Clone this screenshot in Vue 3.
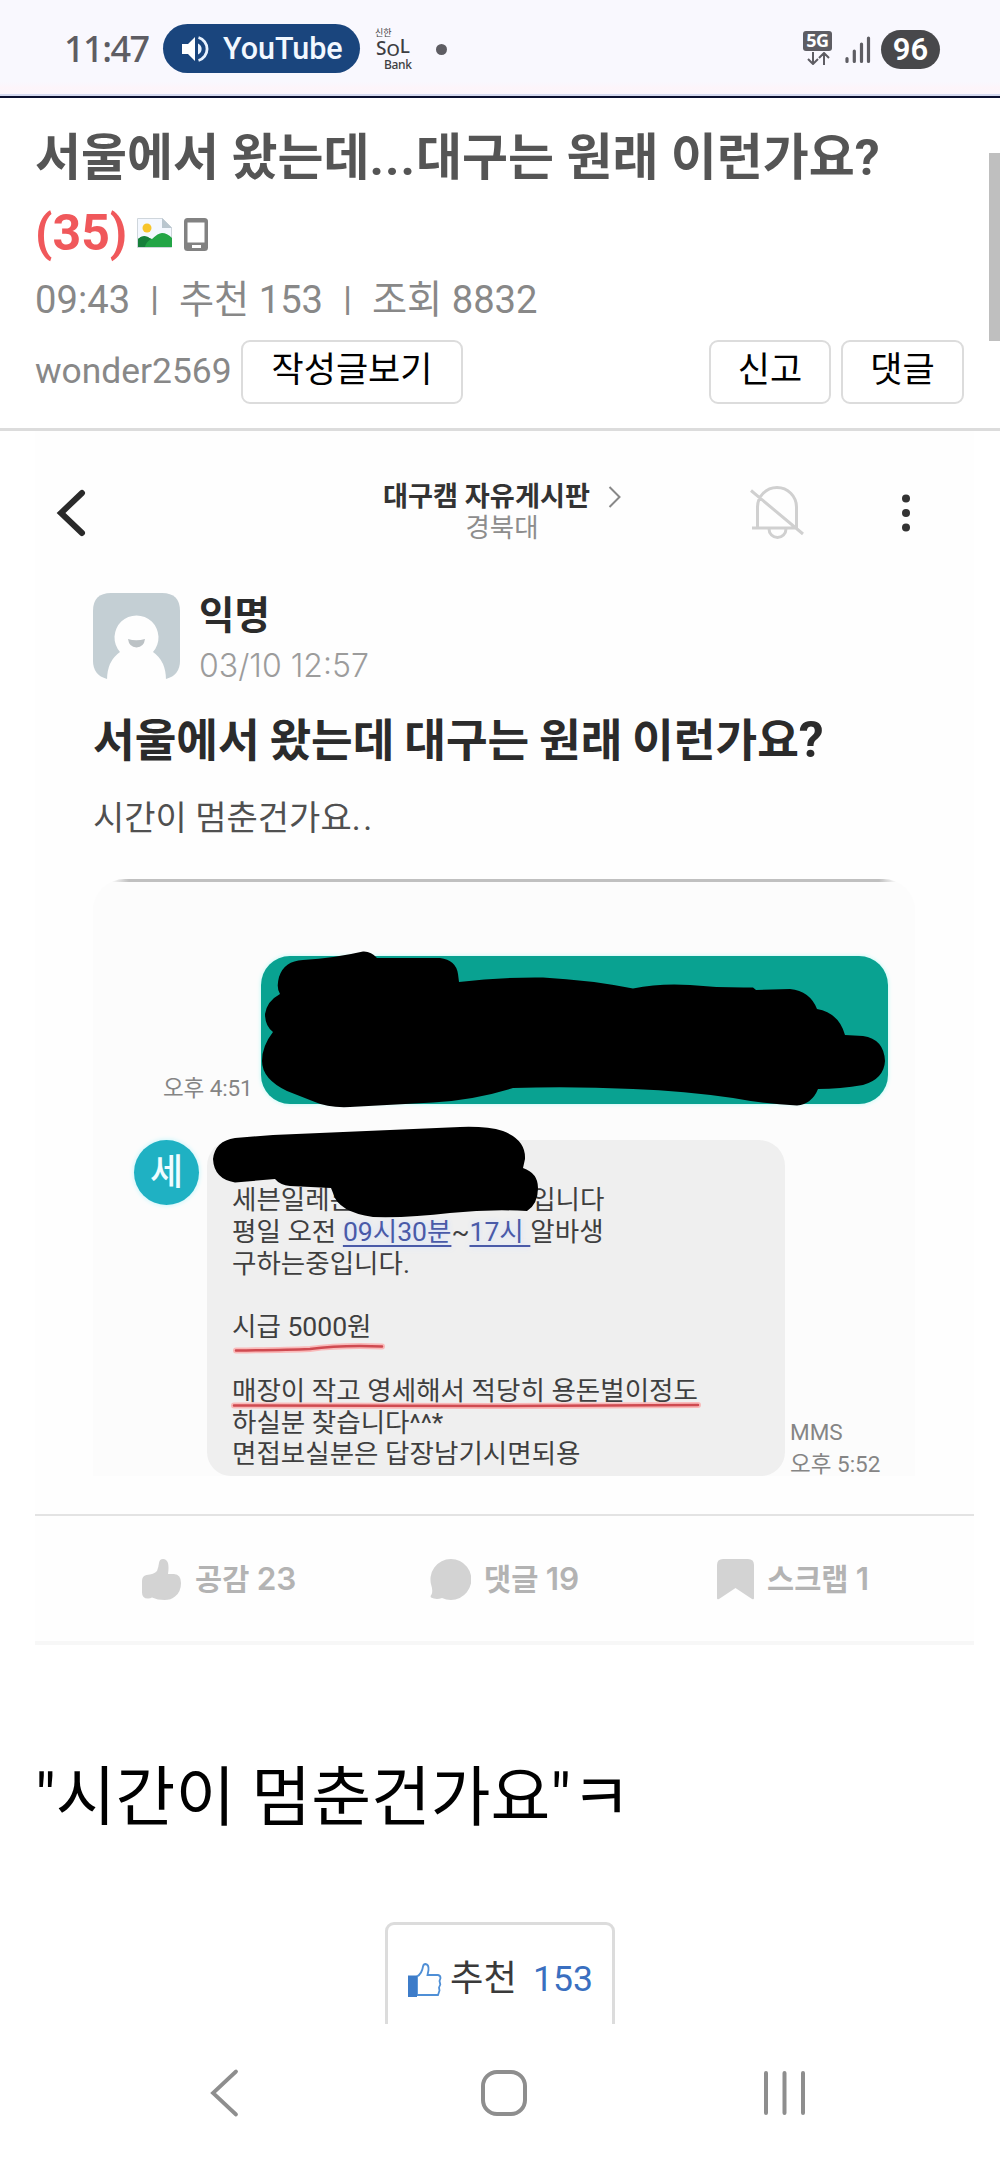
<script setup>
const messageLines = [
  [{ t: '세븐일레븐' }, { gap: true }, { t: '입니다' }],
  [{ t: '평일 오전 ' }, { t: '09시30분', link: true }, { t: '~' }, { t: '17시 ', link: true }, { t: '알바생' }],
  [{ t: '구하는중입니다.' }],
  [],
  [{ t: '시급 5000원' }],
  [],
  [{ t: '매장이 작고 영세해서 적당히 용돈벌이정도' }],
  [{ t: '하실분 찾습니다^^*' }],
  [{ t: '면접보실분은 답장남기시면되용' }],
]
</script>

<template>
  <div class="screen">
    <header class="status">
      <span class="clock">11:47</span>
      <span class="pill">
        <svg class="speaker" width="28" height="28" viewBox="0 0 28 28">
          <path d="M1 9h6l7-7v24l-7-7H1z" fill="#fff" />
          <path d="M17 8.500a6 6 0 0 1 0 11z" fill="#e8f2ff" />
          <path d="M17.500 2.500a12 12 0 0 1 0 23" fill="none" stroke="#e8f2ff" stroke-width="2.800" />
        </svg>
        <span class="app">YouTube</span>
      </span>
      <span class="bank">
        <span class="bank-top">신한</span>
        <span class="bank-mid"><i>S</i><i class="o">O</i><i class="l">L</i></span>
        <span class="bank-low">Bank</span>
      </span>
      <span class="dot"></span>
      <span class="net">
        <span class="fiveg">5G</span>
        <svg width="24" height="13" viewBox="0 0 24 13" fill="none" stroke="#5e5d63" stroke-width="2">
          <path d="M7 0v12M2 7l5 5 5-5M18 13V1M13 6l5-5 5 5" />
        </svg>
      </span>
      <svg class="signal" width="26" height="28" viewBox="0 0 26 28" stroke="#5e5d63" stroke-width="3.200" stroke-linecap="round">
        <path d="M2 22.500v3M9.300 15v10.500M16.500 8v17.500M23.500 2v23.500" />
      </svg>
      <span class="battery">96</span>
    </header>

    <section class="head">
      <h1 class="title">서울에서 왔는데<span class="dots">...</span>대구는 원래 이런가요?</h1>
      <div class="count-row">
        <span class="count">(35)</span>
        <svg class="pic" width="35" height="30" viewBox="0 0 35 30">
          <path d="M.5.5h25l9 9v20H.5z" fill="#f4f8ff" stroke="#cfd6dc" />
          <path d="M25 0l10 10H25z" fill="#b9c6cf" />
          <circle cx="10" cy="10" r="4.500" fill="#f7c52c" />
          <path d="M1 29V21q5-4 10-1.500l4 1.500q6-6 10-6 5 0 10 5v9z" fill="#23a546" />
          <path d="M1 29V21q6-6 13 0-5 3-6 8z" fill="#16803a" />
        </svg>
        <svg class="phone" width="24" height="33" viewBox="0 0 24 33">
          <rect width="24" height="33" rx="3.500" fill="#828282" />
          <path d="M3.500 4.500h17v20h-17z" fill="#fff" />
          <rect x="8" y="27" width="9" height="3" fill="#fff" />
        </svg>
      </div>
      <p class="meta">09:43 <span class="sep">ㅣ</span> 추천 153 <span class="sep">ㅣ</span> 조회 8832</p>
      <div class="author">
        <span class="nick">wonder2569</span>
        <button class="btn wide">작성글보기</button>
        <span class="grow"></span>
        <button class="btn">신고</button>
        <button class="btn last">댓글</button>
      </div>
    </section>
    <div class="scrollbar"></div>

    <article class="capture">
      <div class="bar">
        <svg class="back" width="30" height="50" viewBox="0 0 30 50">
          <path d="M26 5L5 25l21 20" fill="none" stroke="#2a2a2a" stroke-width="6" stroke-linecap="round" />
        </svg>
        <div class="board">
          <div class="board-name">
            <b>대구캠 자유게시판</b>
            <svg width="13" height="24" viewBox="0 0 13 24"><path d="M1.500 2L11.500 12l-10 10" fill="none" stroke="#888" stroke-width="2" /></svg>
          </div>
          <span class="school">경북대</span>
        </div>
        <svg class="bell" width="56" height="56" viewBox="0 0 56 56" fill="none" stroke="#d0d0d0" stroke-width="3">
          <path d="M3 43h46M8.500 43V22a19.500 19.500 0 0 1 39 0v21M20 44a8.500 8.500 0 0 0 17 0M2 5.500L54 49" />
        </svg>
        <svg class="more" width="10" height="40" viewBox="0 0 10 40" fill="#333">
          <circle cx="5" cy="5.500" r="4" /><circle cx="5" cy="20" r="4" /><circle cx="5" cy="34.500" r="4" />
        </svg>
      </div>

      <div class="writer">
        <svg width="87" height="87" viewBox="0 0 87 87">
          <path d="M18 0h51q18 0 18 18v50q0 14-14 18H14Q0 82 0 68V18Q0 0 18 0z" fill="#c4cfd4" />
          <path d="M14 87q0-19 13-28a22 22 0 1 1 33 0q13 9 13 28z" fill="#fefefe" />
          <path d="M35 46q8 2.500 17 0-1 8-8.500 8.500Q36 54 35 46z" fill="#bcc2c5" />
        </svg>
        <div class="who">
          <b>익명</b>
          <span>03/10 12:57</span>
        </div>
      </div>

      <h2>서울에서 왔는데 대구는 원래 이런가요<span class="q">?</span></h2>
      <p class="body">시간이 멈춘건가요<span class="dots">..</span></p>

      <div class="chat">
        <div class="sent">
          <span class="time">오후 4:51</span>
          <div class="green"></div>
        </div>
        <div class="received">
          <span class="face">세</span>
          <div class="gray">
            <div v-for="(line, i) in messageLines" :key="i" class="line">
              <template v-for="(p, j) in line" :key="j"><span v-if="p.gap" class="gap"></span><span v-else :class="{ link: p.link }">{{ p.t }}</span></template>
            </div>
          </div>
          <div class="stamp"><span>MMS</span><span>오후 5:52</span></div>
        </div>
        <svg class="ink" width="822" height="597" viewBox="93 878 822 597">
          <path d="M280 993Q276 987 279 976Q284 960 303 959Q335 957 363 950.500Q371 950 377 957L440 957Q456 959 458 973L459 981Q500 976 543 976.500Q590 979 633 987.500Q660 982 690 984Q720 987 753 986.500L756 989L790 988Q810 990 817 1008Q839 1012 845 1034L863 1035Q884 1038 885 1060Q884 1078 863 1084Q840 1088 818 1088Q812 1103 797 1104.500Q765 1103 733 1097Q685 1090 633 1088Q570 1085 513 1087Q475 1099 433 1101.500L350 1106Q328 1107 315 1101L287 1090Q262 1078 262 1060Q262 1045 273 1031Q265 1025 265 1013Q267 1000 280 993z" />
          <path d="M213 1158Q215 1140 235 1137L273 1134L460 1126Q487 1125 503 1130Q526 1139 525 1158L523 1167Q538 1172 538 1187Q538 1203 527 1210Q490 1208 450 1212Q410 1217 373 1216Q338 1211 333 1192L331 1187L290 1185Q280 1184 275 1178L235 1181.500Q214 1178 213 1158z" />
          <path d="M236 1349.500Q285 1349 310 1348Q340 1344 382 1345.500M234 1404.500L500 1405L698 1404" fill="none" stroke="#f9b9b9" stroke-width="6" stroke-linecap="round" />
          <path d="M236 1349.500Q285 1349 310 1348Q340 1344 382 1345.500M234 1404.500L500 1405L698 1404" fill="none" stroke="#cf4a50" stroke-width="2.500" stroke-linecap="round" />
        </svg>
      </div>

      <div class="stats">
        <div class="stat s1">
          <svg width="39" height="41" viewBox="0 0 39 41" fill="#d3d3d3"><path d="M15 12q1.500-4 2-8Q17.500 0 21 0t5 4q1 4 0 11h6q7 .5 7 9 0 9-6 13.500-4 3.500-10.500 3.500-7 0-12.500-2.500-1.500 1-4 1-6 0-6-6V22q0-5 4.500-6Q12 15.500 15 12z" /></svg>
          <span>공감 <b>23</b></span>
        </div>
        <div class="stat s2">
          <svg width="41" height="41" viewBox="0 0 41 41" fill="#d3d3d3"><path d="M21 0a20.500 20.500 0 1 1-9 39Q6 41 1 38.500q-1-1 .5-3Q3 32 1.500 27A20.500 20.500 0 0 1 21 0z" /></svg>
          <span>댓글 <b>19</b></span>
        </div>
        <div class="stat s3">
          <svg width="37" height="41" viewBox="0 0 37 41" fill="#d3d3d3"><path d="M6 0h25q6 0 6 6v33q0 2-2 1L18.500 29 2 40q-2 1-2-1V6q0-6 6-6z" /></svg>
          <span>스크랩 <b>1</b></span>
        </div>
      </div>
    </article>

    <p class="comment">"시간이 멈춘건가요"ㅋ</p>

    <div class="vote-clip">
      <div class="vote">
        <svg width="34" height="34" viewBox="0 0 34 34">
          <path d="M9 13.500q5-3 6-10Q15.500 1 17.500 1 21 1.500 20.500 7L19.500 12H30q2.500.5 2.500 3l-1 3 .8 3.500-1.300 3 .5 3-1.500 4.500H9z" fill="#fff" stroke="#4f8fd6" stroke-width="1.800" />
          <path d="M0 12.500h9V34H0z" fill="#3d7cc9" />
        </svg>
        <span class="vote-word">추천</span>
        <span class="vote-num">153</span>
      </div>
    </div>

    <nav class="nav">
      <svg class="n-back" width="30" height="50" viewBox="0 0 30 50"><path d="M27 3.500L4 25l23 21.500" fill="none" stroke="#8e8e8e" stroke-width="3.800" stroke-linecap="round" /></svg>
      <svg class="n-home" width="46" height="46" viewBox="0 0 46 46"><rect x="2" y="2" width="42" height="42" rx="14" fill="none" stroke="#8e8e8e" stroke-width="4" /></svg>
      <svg class="n-recent" width="44" height="46" viewBox="0 0 44 46"><path d="M3 3v40M21.500 3v40M40 3v40" stroke="#8e8e8e" stroke-width="4" stroke-linecap="round" /></svg>
    </nav>
  </div>
</template>

<style>
body { background: #fff; }
</style>

<style scoped>
.screen {
  position: relative;
  width: 1000px;
  height: 2166px;
  overflow: hidden;
  background: #fff;
  font-family: Roboto, "Noto Sans CJK KR", sans-serif;
  white-space: nowrap;
}
.screen *, .screen { box-sizing: border-box; }
h1, h2, p { margin: 0; }
svg { display: block; flex: none; }

.status {
  display: flex;
  align-items: flex-start;
  height: 98px;
  padding-left: 64px;
  background: linear-gradient(#f9f8fe 82px, #fdf5fa 88px, #fbf6fc 94px);
  border-bottom: 2px solid #0b1030;
  box-shadow: inset 0 -2px 0 #d5daf0;
}
.clock {
  width: 99px;
  margin-top: 24px;
  font: 500 36px/50px "Noto Sans", sans-serif;
  letter-spacing: -1.500px;
  color: #5e5d63;
}
.pill {
  display: flex;
  align-items: center;
  width: 197px;
  height: 49px;
  margin-top: 24px;
  padding-left: 18px;
  border-radius: 25px;
  background: #1a457d;
}
.app { margin-left: 14px; font-size: 30.500px; font-weight: 500; color: #f2f8ff; }
.bank { display: flex; flex-direction: column; width: 40px; height: 42px; margin: 29px 0 0 15px; color: #3e3e42; }
.bank-top { font-size: 9px; line-height: 9px; }
.bank-mid { display: flex; height: 20px; font: 500 19px/20px "Noto Sans", sans-serif; padding-left: 1px; }
.bank-mid i { font-style: normal; }
.bank-mid .o { font-size: 17px; line-height: 24px; }
.bank-mid .l { line-height: 16px; }
.bank-low { margin-left: 9px; font: 500 12px/14px "Noto Sans", sans-serif; letter-spacing: -.3px; }
.dot { width: 11px; height: 11px; margin: 44px 0 0 21px; border-radius: 50%; background: #5e5d63; }
.net { display: flex; flex-direction: column; align-items: center; width: 29px; margin: 31px 0 0 356px; }
.fiveg { width: 29px; height: 20px; margin-bottom: 1px; border-radius: 3px; background: #5e5d63; color: #fff; font: 700 18px/19px "Noto Sans", sans-serif; letter-spacing: -.5px; text-align: center; }
.signal { margin: 36px 0 0 13px; }
.battery {
  width: 59px;
  height: 39px;
  margin: 30px 0 0 10px;
  border-radius: 20px;
  background: #48484b;
  color: #fff;
  font: 600 31px/39px Roboto, sans-serif;
  text-align: center;
}

.head { height: 333px; padding: 23px 36px 0 35px; border-bottom: 3px solid #dcdcdc; }
.title { height: 75px; font-size: 50px; line-height: 75px; font-weight: 700; color: #555; }
.title .dots { letter-spacing: 1px; }
.count-row { display: flex; height: 75px; }
.count { width: 102px; font-size: 50px; line-height: 75px; font-weight: 700; color: #f0585b; }
.pic { margin-top: 22px; }
.phone { margin: 22px 0 0 12px; }
.meta { height: 50px; margin-top: 4px; font-size: 38.200px; line-height: 50px; color: #888; }
.sep { font-size: 32.500px; line-height: 1; }
.author { display: flex; height: 64px; margin-top: 15px; }
.nick { width: 206px; font-size: 35.400px; line-height: 62px; color: #888; }
.btn {
  width: 122px;
  height: 64px;
  padding: 0 0 2px;
  border: 2px solid #dcdcdc;
  border-radius: 9px;
  background: #fff;
  font: 400 35px/56px Roboto, "Noto Sans CJK KR", sans-serif;
  color: #000;
}
.btn.wide { width: 222px; }
.btn.last { width: 123px; margin-left: 10px; }
.grow { flex: 1; }
.scrollbar { position: absolute; right: 0; top: 153px; width: 11px; height: 188px; background: #bfbfbf; }

.capture { width: 939px; height: 1214px; margin-left: 35px; padding-top: 32px; background: #fefefe; border-bottom: 4px solid #f7f7f7; }
.bar { display: flex; align-items: center; height: 100px; padding-left: 21px; }
.board { display: flex; flex-direction: column; align-items: center; width: 240px; margin: -2px 0 0 296px; }
.board-name { display: flex; align-items: center; gap: 18px; height: 31px; color: #333; font-size: 27.200px; line-height: 31px; }
.board-name b { font-weight: 700; }
.school { font-size: 26.500px; line-height: 30px; color: #8d8d8d; font-weight: 400; }
.bell { margin-left: 127px; }
.more { margin-left: 96px; }
.writer { display: flex; height: 87px; margin: 30px 0 0 58px; }
.who { display: flex; flex-direction: column; margin-left: 19px; }
.who b { font-size: 38.500px; line-height: 46px; color: #2b2b2b; }
.who span { margin-top: 3px; font: 300 32px/48px Inter, "Liberation Sans", sans-serif; color: #9c9c9c; }
h2 { margin: 30px 0 0 58px; font-size: 45.300px; line-height: 64px; font-weight: 700; color: #2b2b2b; word-spacing: -1.500px; }
.q { font-size: 50px; line-height: 1; }
.body { margin: 18px 0 0 58px; font-size: 34px; line-height: 52px; color: #505050; font-weight: 400; }
.body .dots { letter-spacing: 2.500px; }

.chat {
  position: relative;
  width: 822px;
  height: 597px;
  margin: 35px 0 0 58px;
  border-radius: 32px 32px 0 0;
  background: linear-gradient(90deg, transparent 18px, #c0c0c0 36px, #c0c0c0 786px, transparent 804px) top / 100% 3px no-repeat, #fcfcfc;
}
.sent { display: flex; align-items: flex-end; height: 225px; padding: 0 27px 0 70px; }
.time, .stamp { font-size: 22.500px; line-height: 32px; color: #858585; }
.time { width: 98px; letter-spacing: -.1px; }
.green { width: 627px; height: 148px; border-radius: 29px; background: #09a291; box-shadow: 0 0 4px #b8fbf6; }
.received { display: flex; height: 336px; margin-top: 36px; padding-left: 41px; }
.face {
  width: 65px;
  height: 65px;
  border-radius: 50%;
  background: #1fb1c3;
  box-shadow: 0 0 5px #b8f4fb;
  color: #effcff;
  font-size: 36px;
  line-height: 67px;
  font-weight: 500;
  text-align: center;
}
.gray { width: 578px; height: 336px; margin-left: 8px; padding: 44px 0 0 25px; border-radius: 26px 26px 24px 24px; background: #efefef; color: #3f3f3f; font-size: 26.550px; }
.line { height: 31.800px; line-height: 31.800px; white-space: pre; }
.gap { display: inline-block; width: 177px; }
.link { color: #4a5aa8; text-decoration: underline; text-decoration-thickness: 1.500px; text-underline-offset: 4px; text-shadow: 0 0 6px #cfdcff; }
.stamp { display: flex; flex-direction: column; justify-content: flex-end; margin-left: 5px; height: 340px; }
.ink { position: absolute; left: 0; top: 0; }

.stats { display: flex; height: 129px; margin-top: 38px; padding-top: 43px; border-top: 2px solid #e3e3e3; }
.stat { display: flex; font: 600 29.500px/40px Inter, "Noto Sans CJK KR", sans-serif; color: #b3b3b3; }
.stat span { margin-left: 13px; }
.stat b { font-size: 31.500px; font-weight: 600; }
.s1 { width: 288px; margin-left: 107px; }
.stat.s1 span { margin-left: 14px; }
.s2 { width: 287px; }
.comment { height: 100px; margin: 103px 0 0 35px; font-size: 65px; line-height: 100px; color: #000; }
.vote-clip { height: 102px; margin-top: 74px; overflow: hidden; }
.vote { display: flex; width: 230px; height: 130px; margin-left: 385px; padding: 27px 0 0 20px; border: 3px solid #dcdcdc; border-radius: 9px; font-size: 36.300px; line-height: 54px; }
.vote svg { margin-top: 11px; }
.vote-word { width: 83px; margin-left: 8px; color: #3a3a3a; }
.vote-num { color: #3a6fc0; font-size: 35.500px; }
.nav { display: flex; align-items: center; height: 137px; padding-left: 209px; }
.n-home { margin-left: 242px; }
.n-recent { margin-left: 236px; }
</style>
